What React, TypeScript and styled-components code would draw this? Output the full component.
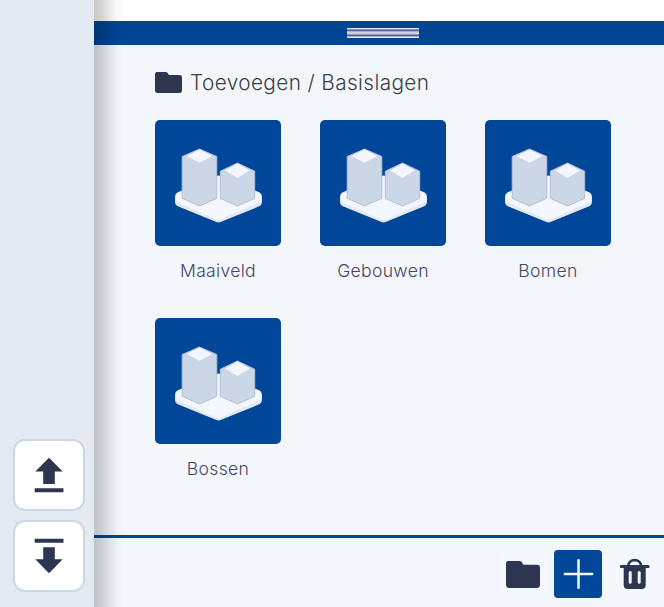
import React from "react";
import styled, { createGlobalStyle } from "styled-components";

const GlobalStyle = createGlobalStyle`
  * { box-sizing: border-box; }
  body { margin: 0; font-family: Inter, sans-serif; background: #fff; }
  button { font: inherit; color: inherit; padding: 0; border: 0; cursor: pointer; }
`;

const ink = "#2e3550";
const blue = "#004699";

const Shell = styled.div`
  display: grid;
  grid-template-columns: 94px 1fr;
  height: 607px;
  overflow: hidden;
`;

const Sidebar = styled.aside`
  display: flex;
  flex-direction: column;
  justify-content: flex-end;
  align-items: center;
  gap: 9px;
  padding: 0 5px 15px 9px;
  background: #e3eaf2;
`;

const ArrowButton = styled.button`
  display: flex;
  align-items: center;
  justify-content: center;
  width: 72px;
  height: 72px;
  border: 2px solid #cdd8e5;
  border-radius: 12px;
  background: #fff;
  color: ${ink};
`;

const Main = styled.main`
  position: relative;
  display: flex;
  flex-direction: column;
  min-width: 0;
  padding-top: 21px;
`;

const EdgeShadow = styled.div`
  position: absolute;
  inset: 0 auto 0 0;
  width: 29px;
  pointer-events: none;
  background: linear-gradient(to right, rgba(0, 0, 0, 0.21), rgba(0, 0, 0, 0.17) 25%, rgba(0, 0, 0, 0.09) 53%, rgba(0, 0, 0, 0.025) 80%, transparent);
`;

const DragBar = styled.div`
  display: flex;
  justify-content: center;
  align-items: center;
  height: 24px;
  padding-left: 8px;
  background: #004494;
`;

const Grip = styled.div`
  width: 72px;
  height: 10px;
  background: linear-gradient(
    #e8edf6 0 1px, #8194c2 1px 2px, #53649f 2px 3px, #a5b1d2 3px 4px, #c9d1e1 4px 6px,
    #8e9dc7 6px 7px, #4b5f9e 7px 8px, #a3b1d4 8px 9px, #e8edf6 9px 10px
  );
`;

const Content = styled.section`
  height: 490px;
  padding: 23px 0 0 61px;
  background: #f3f7fc;
`;

const Heading = styled.h1`
  display: flex;
  align-items: center;
  gap: 8px;
  height: 28px;
  margin: 0 0 24px;
  color: #3d4045;
  font-size: 20.8px;
  font-weight: 300;
  letter-spacing: 0.37px;
  white-space: pre;
`;

const TileGrid = styled.div`
  display: grid;
  grid-template-columns: repeat(3, 126px);
  gap: 36px 39px;
`;

const Tile = styled.button`
  display: flex;
  flex-direction: column;
  align-items: center;
  height: 162px;
  background: none;
`;

const TileImage = styled.span`
  width: 126px;
  height: 126px;
  border-radius: 5px;
  background: ${blue};
`;

const TileLabel = styled.span`
  margin-top: 12px;
  color: #454862;
  font-size: 17.6px;
  font-weight: 300;
  line-height: 25px;
  letter-spacing: 0.3px;
`;

const Footer = styled.footer`
  display: flex;
  justify-content: flex-end;
  gap: 7px;
  height: 72px;
  padding: 12px 7px 0 0;
  border-top: 3px solid ${blue};
  background: #f3f7fc;
`;

const ToolButton = styled.button<{ $active?: boolean }>`
  width: 48px;
  height: 48px;
  border-radius: 4px;
  color: ${(p) => (p.$active ? "#f4f7ff" : ink)};
  background: ${(p) => (p.$active ? blue : "#f4f7fd")};
`;

const FolderTool = styled(ToolButton)`
  padding: 1px 0 0 7px;
`;

const Svg = styled.svg`
  display: block;
`;

function ArrowIcon({ down = false }: { down?: boolean }) {
  return (
    <Svg width="68" height="68" viewBox="0 0 68 68" fill="currentColor">
      {down ? (
        <path d="M19.7 16.8h28.8v4H19.7zM28.2 25.2h11.6v12.1h7.9L34 51.2 20.3 37.3h7.9z" />
      ) : (
        <path d="M34 16.7 47.7 30.6h-7.9v12.3H28.2V30.6h-7.9zM19.7 47.2h28.8v4H19.7z" />
      )}
    </Svg>
  );
}

function FolderIcon({ width, height }: { width: number; height: number }) {
  return (
    <Svg width={width} height={height} viewBox="0 0 34 27" preserveAspectRatio="none" fill={ink}>
      <path d="M2.5 0h11q2.5 0 3 2.3.3 1.5 2 1.5H31q3 0 3 3v16.7q0 3.5-3.5 3.5h-27Q0 27 0 23.5V2.5Q0 0 2.5 0Z" />
    </Svg>
  );
}

function BlocksIcon() {
  return (
    <Svg width="126" height="126" viewBox="0 0 126 126">
      <path d="M25.5 77 63.5 61 101.5 77v4.5L63.5 97 25.5 81.5Z" fill="#e4e9f5" stroke="#e4e9f5" strokeWidth="11" strokeLinejoin="round" />
      <path d="M25 77 63.5 60 102 77v2L63.5 96 25 79Z" fill="#f4f7fd" stroke="#f4f7fd" strokeWidth="8" strokeLinejoin="round" />
      <path d="m44.5 29 17.3 7.5v41.8L44.5 86 27.2 78.3V36.5Z" fill="#cbd7e6" stroke="#b3bddb" strokeLinejoin="round" />
      <path d="m44.5 29.5 13 6.5-13 6.8-13-6.8Z" fill="#f3f7fd" />
      <path d="m82.5 43 17.2 8.2v27.1L82.5 86l-17.2-7.7V51.2Z" fill="#cbd7e6" stroke="#b3bddb" strokeLinejoin="round" />
      <path d="m82.5 43.5 12.5 7-12.5 7.5L70 50.5Z" fill="#f3f7fd" />
    </Svg>
  );
}

function PlusIcon() {
  return (
    <Svg width="48" height="48" viewBox="0 0 48 48" fill="none" stroke="currentColor" strokeWidth="2.5" strokeLinecap="round">
      <path d="M24.5 10.3v27.4M10.8 24h27.4" />
    </Svg>
  );
}

function TrashIcon() {
  return (
    <Svg width="48" height="48" viewBox="-0.7 0 48 48">
      <path d="M18.5 16.5C18.5 8 31.5 8 31.5 16.5" fill="none" stroke={ink} strokeWidth="2.8" />
      <path d="M11.5 15h27q1.5 0 1.5 1.5T38.500 18H36v17q0 4-4 4H18q-4 0-4-4V18h-2.500Q10 18 10 16.500T11.500 15Z" fill={ink} />
      <path d="M20.5 22.5v9.7M29.5 22.5v9.7" fill="none" stroke="#f4f7fd" strokeWidth="3" strokeLinecap="round" />
    </Svg>
  );
}

const layers = ["Maaiveld", "Gebouwen", "Bomen", "Bossen"];

export default function App() {
  return (
    <>
      <GlobalStyle />
      <Shell>
        <Sidebar>
          <ArrowButton aria-label="Omhoog"><ArrowIcon /></ArrowButton>
          <ArrowButton aria-label="Omlaag"><ArrowIcon down /></ArrowButton>
        </Sidebar>
        <Main>
          <DragBar><Grip /></DragBar>
          <Content>
            <Heading><FolderIcon width={27} height={21} />Toevoegen / Basislagen</Heading>
            <TileGrid>
              {layers.map((name) => (
                <Tile key={name}>
                  <TileImage><BlocksIcon /></TileImage>
                  <TileLabel>{name}</TileLabel>
                </Tile>
              ))}
            </TileGrid>
          </Content>
          <Footer>
            <FolderTool aria-label="Map"><FolderIcon width={34} height={27} /></FolderTool>
            <ToolButton $active aria-label="Toevoegen"><PlusIcon /></ToolButton>
            <ToolButton aria-label="Verwijderen"><TrashIcon /></ToolButton>
          </Footer>
          <EdgeShadow />
        </Main>
      </Shell>
    </>
  );
}
